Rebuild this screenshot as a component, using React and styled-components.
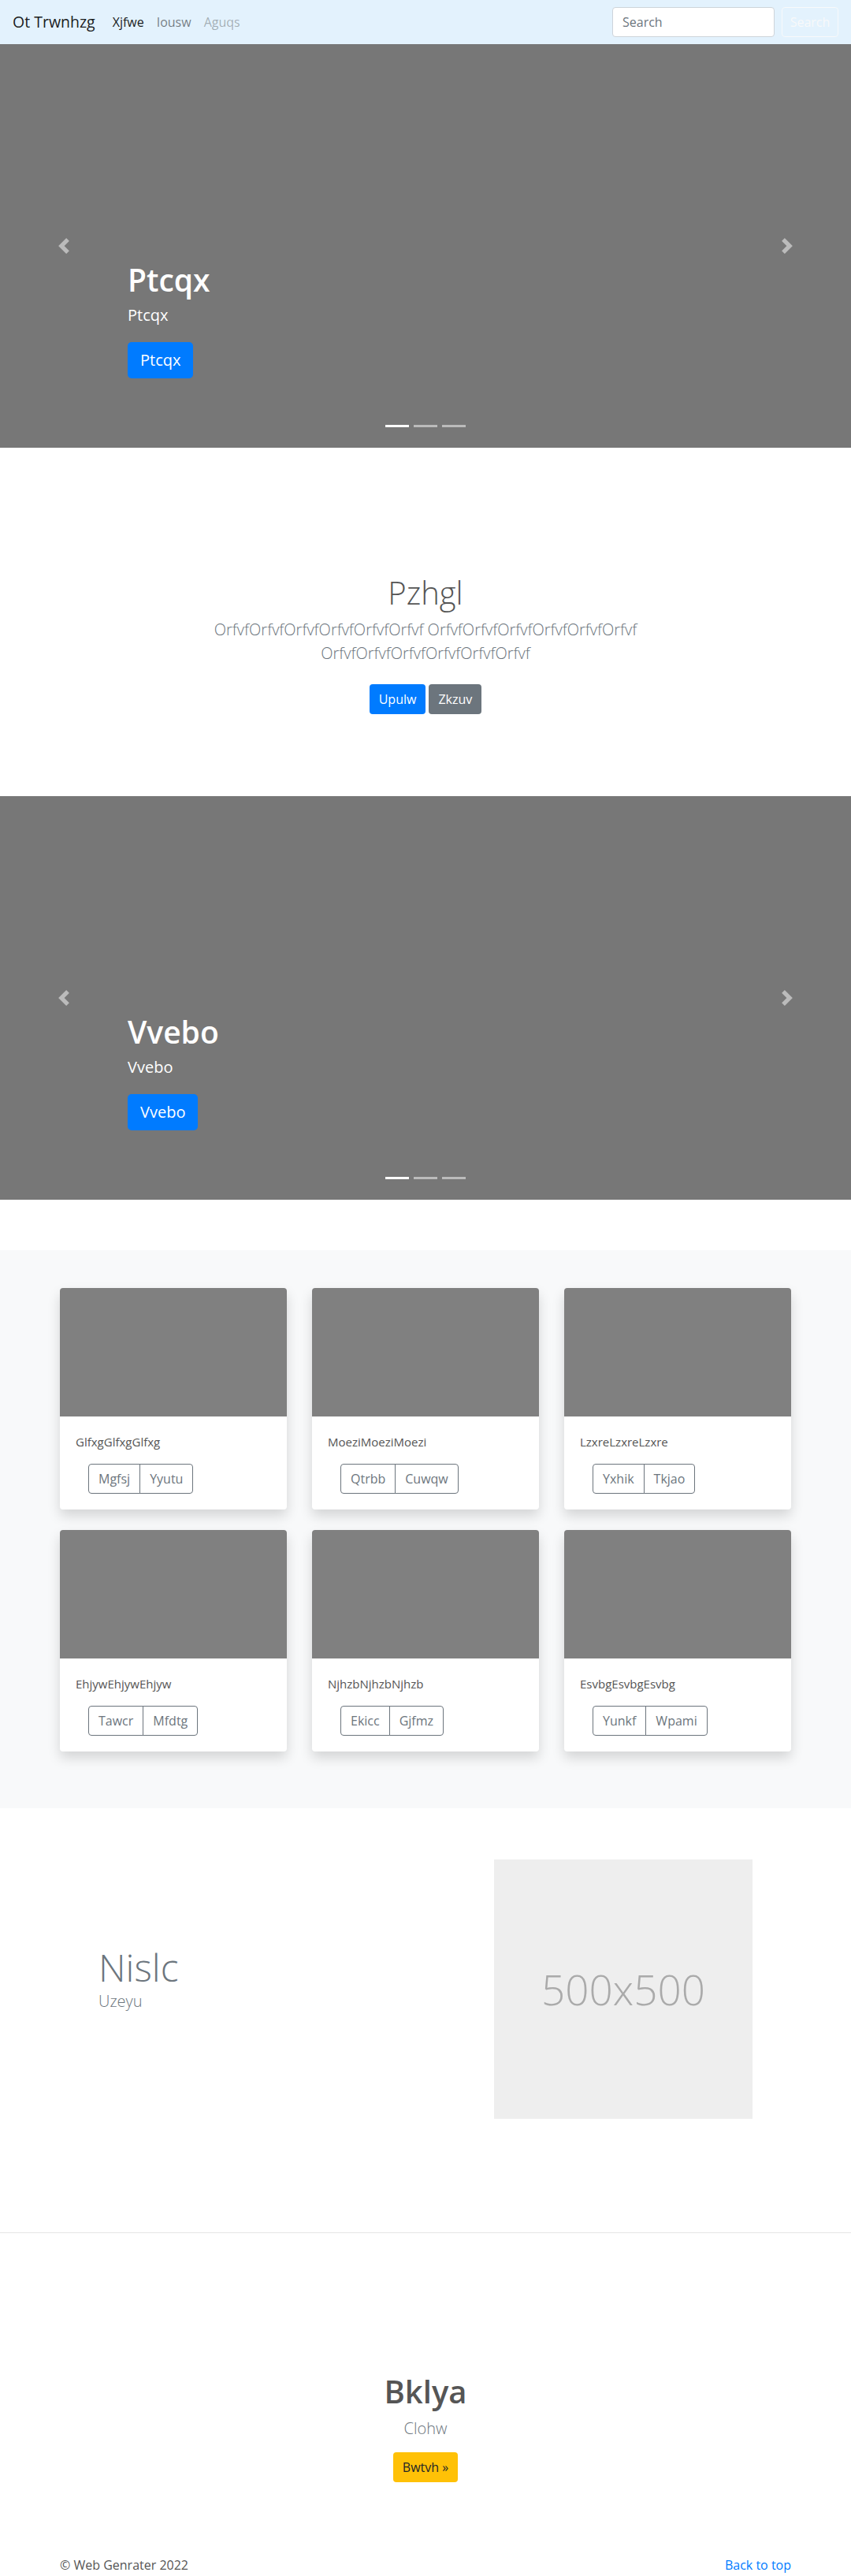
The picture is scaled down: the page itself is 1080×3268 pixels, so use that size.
import React from "react";
import styled, { createGlobalStyle } from "styled-components";

const GlobalStyle = createGlobalStyle`
  *, *::before, *::after { box-sizing: border-box; }
  body {
    margin: 0;
    font-family: "Open Sans", "Noto Sans", Arial, sans-serif;
    font-size: 16px;
    line-height: 1.5;
    color: #212529;
    background: #fff;
  }
  h1, h2, p { margin: 0; }
`;

/* ---------- Navbar ---------- */
const Navbar = styled.nav`
  display: flex;
  align-items: center;
  height: 56px;
  padding: 0 16px;
  background: #e3f2fd;
`;

const Brand = styled.a`
  font-size: 19.5px;
  line-height: 30px;
  color: rgba(0, 0, 0, 0.9);
  text-decoration: none;
  margin-right: 14px;
`;

const NavList = styled.div`
  display: flex;
  align-items: center;
`;

const NavLink = styled.a`
  padding: 8px;
  font-size: 16px;
  text-decoration: none;
  color: ${(p) =>
    p.$state === "active"
      ? "rgba(0,0,0,0.9)"
      : p.$state === "disabled"
      ? "rgba(0,0,0,0.3)"
      : "rgba(0,0,0,0.5)"};
`;

const SearchForm = styled.form`
  margin-left: auto;
  display: flex;
  align-items: center;
  gap: 9px;
`;

const SearchInput = styled.input`
  width: 206px;
  height: 38px;
  padding: 6px 12px;
  font-family: inherit;
  font-size: 16px;
  color: #495057;
  background: #fff;
  border: 1px solid #ced4da;
  border-radius: 4px;
  &::placeholder { color: #6c757d; }
`;

const OutlineLightButton = styled.button`
  width: 72px;
  height: 38px;
  font-family: inherit;
  font-size: 16px;
  color: #f8f9fa;
  background: transparent;
  border: 1px solid #f8f9fa;
  border-radius: 4px;
`;

/* ---------- Carousel ---------- */
const Slide = styled.section`
  position: relative;
  height: 512px;
  background: #777;
  display: flex;
  flex-direction: column;
  justify-content: flex-end;
  padding: 0 162px 88px;
  color: #fff;
`;

const CaptionTitle = styled.h1`
  font-size: 39px;
  font-weight: 600;
  line-height: 1.2;
  margin-bottom: 6px;
`;

const CaptionText = styled.p`
  font-size: 20px;
  line-height: 30px;
  margin-bottom: 19px;
`;

const LargeButton = styled.a`
  align-self: flex-start;
  display: inline-block;
  padding: 8px 16px;
  font-size: 20px;
  line-height: 30px;
  color: #fff;
  background: #007bff;
  border-radius: 5px;
  text-decoration: none;
`;

const Control = styled.a`
  position: absolute;
  top: 0;
  bottom: 0;
  ${(p) => (p.$side === "left" ? "left: 0;" : "right: 0;")}
  width: 15%;
  display: flex;
  align-items: center;
  justify-content: center;
  opacity: 0.5;
`;

const Indicators = styled.ol`
  position: absolute;
  left: 0;
  right: 0;
  bottom: 26px;
  margin: 0;
  padding: 0;
  list-style: none;
  display: flex;
  justify-content: center;
  gap: 6px;
`;

const Indicator = styled.li`
  width: 30px;
  height: 3px;
  background: #fff;
  opacity: ${(p) => (p.$active ? 1 : 0.5)};
`;

const ChevronLeft = () => (
  <svg width="20" height="20" viewBox="0 0 8 8" fill="#fff">
    <path d="M5.25 0l-4 4 4 4 1.5-1.5L4.25 4l2.5-2.5L5.25 0z" />
  </svg>
);

const ChevronRight = () => (
  <svg width="20" height="20" viewBox="0 0 8 8" fill="#fff">
    <path d="M2.75 0l-1.5 1.5L3.75 4l-2.5 2.5L2.75 8l4-4-4-4z" />
  </svg>
);

const Carousel = ({ title }) => (
  <Slide>
    <CaptionTitle>{title}</CaptionTitle>
    <CaptionText>{title}</CaptionText>
    <LargeButton href="#">{title}</LargeButton>
    <Control $side="left" href="#">
      <ChevronLeft />
    </Control>
    <Control $side="right" href="#">
      <ChevronRight />
    </Control>
    <Indicators>
      <Indicator $active />
      <Indicator />
      <Indicator />
    </Indicators>
  </Slide>
);

/* ---------- Hero ---------- */
const Hero = styled.section`
  padding: 160px 0 96px;
  text-align: center;
`;

const HeroInner = styled.div`
  max-width: 610px;
  margin: 0 auto;
`;

const HeroTitle = styled.h1`
  font-size: 40px;
  font-weight: 300;
  line-height: 1.2;
  color: #555;
  margin-bottom: 8px;
`;

const Lead = styled.p`
  font-size: 20px;
  font-weight: 300;
  line-height: 30px;
  color: #6c757d;
  margin-bottom: ${(p) => p.$mb || 0}px;
`;

const ButtonRow = styled.div`
  display: flex;
  justify-content: center;
  gap: 4px;
  margin: 24px 0 8px;
`;

const SolidButton = styled.a`
  display: inline-block;
  padding: 7px 12px;
  font-size: 16px;
  line-height: 24px;
  color: ${(p) => p.$fg || "#fff"};
  background: ${(p) => p.$bg};
  border-radius: 4px;
  text-decoration: none;
`;

/* ---------- Album ---------- */
const Album = styled.section`
  margin-top: 64px;
  padding: 48px 0 48px;
  background: #f8f9fa;
`;

const Container = styled.div`
  width: 960px;
  margin: 0 auto;
`;

const CardGrid = styled.div`
  display: grid;
  grid-template-columns: repeat(3, 288px);
  column-gap: 32px;
  row-gap: 26px;
  padding: 0 16px 24px;
`;

const Card = styled.div`
  background: #fff;
  border-radius: 4px;
  overflow: hidden;
  box-shadow: 0 8px 16px rgba(0, 0, 0, 0.15);
`;

const CardImage = styled.div`
  height: 163px;
  background: #808080;
`;

const CardBody = styled.div`
  padding: 20px;
`;

const CardText = styled.p`
  font-size: 15px;
  line-height: 24px;
  color: #555;
  margin-bottom: 16px;
`;

const ButtonGroup = styled.div`
  display: inline-flex;
  margin-left: 16px;
`;

const GroupButton = styled.button`
  padding: 6px 12px;
  font-family: inherit;
  font-size: 16px;
  line-height: 24px;
  color: #6c757d;
  background: transparent;
  border: 1px solid #6c757d;
  border-radius: 0;
  &:first-child { border-radius: 4px 0 0 4px; }
  &:last-child { border-radius: 0 4px 4px 0; margin-left: -1px; }
`;

/* ---------- Feature ---------- */
const Feature = styled.section`
  padding: 65px 0 144px;
`;

const FeatureInner = styled.div`
  width: 960px;
  margin: 0 auto;
  padding: 0 65px;
  display: flex;
  align-items: center;
  justify-content: space-between;
`;

const FeatureText = styled.div`
  margin-bottom: 26px;
`;

const FeatureTitle = styled.h2`
  font-size: 48px;
  font-weight: 300;
  line-height: 1.2;
  color: #6c757d;
`;

const FeatureSub = styled.p`
  font-size: 20px;
  font-weight: 300;
  line-height: 30px;
  color: #6c757d;
`;

const Placeholder = styled.div`
  width: 328px;
  height: 329px;
  background: #eee;
  color: #aaa;
  display: flex;
  align-items: center;
  justify-content: center;
  font-size: 53px;
  font-weight: 300;
`;

/* ---------- CTA + footer ---------- */
const Cta = styled.section`
  border-top: 1px solid #e5e5e5;
  padding: 177px 0 46px;
  text-align: center;
  display: flex;
  flex-direction: column;
  align-items: center;
`;

const CtaTitle = styled.h2`
  font-size: 40px;
  font-weight: 600;
  line-height: 1.2;
  color: #555;
  margin-bottom: 8px;
`;

const Footer = styled.footer`
  width: 960px;
  margin: 0 auto;
  padding: 47px 16px 48px;
  display: flex;
  justify-content: space-between;
  font-size: 16px;
  line-height: 24px;
  color: #555;
`;

const FooterLink = styled.a`
  color: #007bff;
  text-decoration: none;
`;

const cards = [
  ["GlfxgGlfxgGlfxg", "Mgfsj", "Yyutu"],
  ["MoeziMoeziMoezi", "Qtrbb", "Cuwqw"],
  ["LzxreLzxreLzxre", "Yxhik", "Tkjao"],
  ["EhjywEhjywEhjyw", "Tawcr", "Mfdtg"],
  ["NjhzbNjhzbNjhzb", "Ekicc", "Gjfmz"],
  ["EsvbgEsvbgEsvbg", "Yunkf", "Wpami"],
];

export default function App() {
  return (
    <>
      <GlobalStyle />
      <Navbar>
        <Brand href="#">Ot Trwnhzg</Brand>
        <NavList>
          <NavLink $state="active" href="#">Xjfwe</NavLink>
          <NavLink href="#">Iousw</NavLink>
          <NavLink $state="disabled" href="#">Aguqs</NavLink>
        </NavList>
        <SearchForm onSubmit={(e) => e.preventDefault()}>
          <SearchInput type="search" placeholder="Search" />
          <OutlineLightButton type="submit">Search</OutlineLightButton>
        </SearchForm>
      </Navbar>

      <Carousel title="Ptcqx" />

      <Hero>
        <HeroInner>
          <HeroTitle>Pzhgl</HeroTitle>
          <Lead $mb={16}>
            OrfvfOrfvfOrfvfOrfvfOrfvfOrfvf OrfvfOrfvfOrfvfOrfvfOrfvfOrfvf OrfvfOrfvfOrfvfOrfvfOrfvfOrfvf
          </Lead>
          <ButtonRow>
            <SolidButton $bg="#007bff" href="#">Upulw</SolidButton>
            <SolidButton $bg="#6c757d" href="#">Zkzuv</SolidButton>
          </ButtonRow>
        </HeroInner>
      </Hero>

      <Carousel title="Vvebo" />

      <Album>
        <Container>
          <CardGrid>
            {cards.map(([text, a, b]) => (
              <Card key={text}>
                <CardImage />
                <CardBody>
                  <CardText>{text}</CardText>
                  <ButtonGroup>
                    <GroupButton type="button">{a}</GroupButton>
                    <GroupButton type="button">{b}</GroupButton>
                  </ButtonGroup>
                </CardBody>
              </Card>
            ))}
          </CardGrid>
        </Container>
      </Album>

      <Feature>
        <FeatureInner>
          <FeatureText>
            <FeatureTitle>Nislc</FeatureTitle>
            <FeatureSub>Uzeyu</FeatureSub>
          </FeatureText>
          <Placeholder>500x500</Placeholder>
        </FeatureInner>
      </Feature>

      <Cta>
        <CtaTitle>Bklya</CtaTitle>
        <Lead $mb={15}>Clohw</Lead>
        <SolidButton $bg="#ffc107" $fg="#212529" href="#">Bwtvh »</SolidButton>
      </Cta>

      <Footer>
        <span>© Web Genrater 2022</span>
        <FooterLink href="#">Back to top</FooterLink>
      </Footer>
    </>
  );
}
